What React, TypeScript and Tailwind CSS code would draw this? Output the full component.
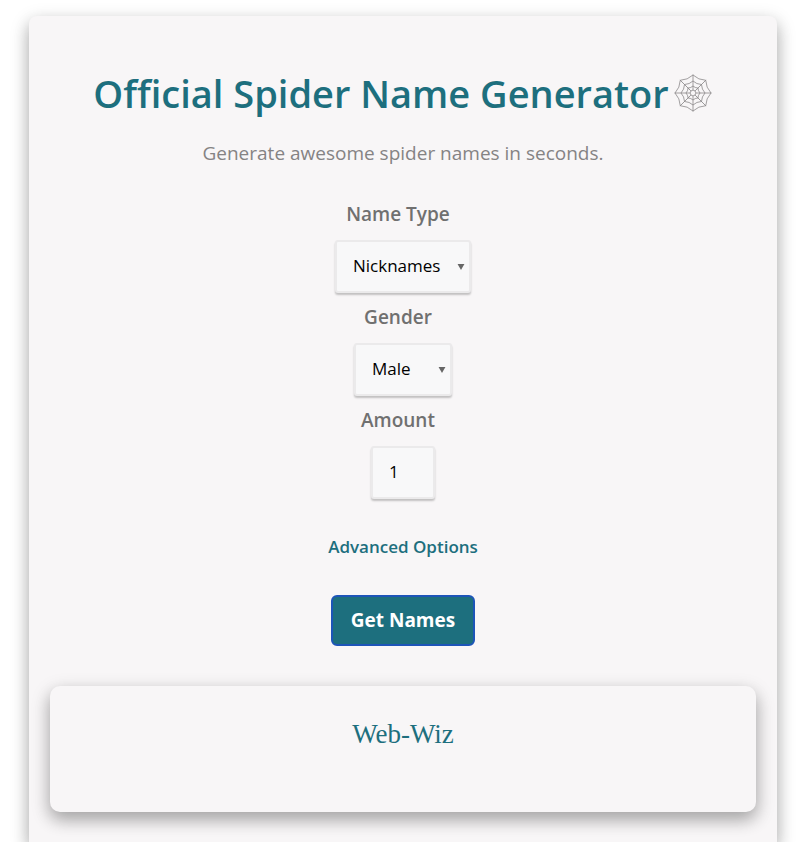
import { useState } from 'react';
import type { ReactNode } from 'react';

const NAME_TYPES = ['Nicknames', 'Full Names'];
const GENDERS = ['Male', 'Female'];

const SPOKES = [0, 45, 90, 135, 180, 225, 270, 315];
const RINGS = [18, 12, 7, 3];

// One ring of the web: eight threads sagging towards the middle
function ringPath(radius: number) {
  const point = (deg: number, r: number) => {
    const rad = (deg * Math.PI) / 180;
    return `${(20 + r * Math.cos(rad)).toFixed(2)} ${(20 + r * Math.sin(rad)).toFixed(2)}`;
  };
  const arcs = SPOKES.map((deg) => `Q${point(deg + 22.5, radius * 0.78)} ${point(deg + 45, radius)}`);
  return `M${point(0, radius)}${arcs.join('')}Z`;
}

function WebIcon() {
  return (
    <svg viewBox="0 0 40 40" className="size-10 shrink-0" fill="none" stroke="#8a8889" strokeWidth="0.8" aria-hidden="true">
      {SPOKES.map((deg) => (
        <path key={deg} d="M20 17V1.5" transform={`rotate(${deg} 20 20)`} />
      ))}
      {RINGS.map((radius) => (
        <path key={radius} d={ringPath(radius)} />
      ))}
    </svg>
  );
}

const CONTROL =
  'h-[53px] appearance-none rounded-[3px] border-2 border-[#ebeaeb] bg-[#f8f8f9] pb-0.5 pl-4 text-[17px] text-black shadow-[0_2px_2px_rgba(0,0,0,0.22)]';

function Field({ id, label, children }: { id: string; label: string; children: ReactNode }) {
  return (
    <div className="flex flex-col items-center gap-3.5">
      <label htmlFor={id} className="pr-2.5 text-[19px] leading-6 font-semibold text-[#707070]">
        {label}
      </label>
      {children}
    </div>
  );
}

function Select({ id, options, width }: { id: string; options: string[]; width: string }) {
  return (
    <div className="relative">
      <select id={id} className={`${CONTROL} ${width} block`}>
        {options.map((option) => (
          <option key={option}>{option}</option>
        ))}
      </select>
      <svg viewBox="0 0 8 7" className="pointer-events-none absolute top-6 right-1.5 h-1.5 w-2" fill="#666666" aria-hidden="true">
        <path d="M0 0h8L4 7z" />
      </svg>
    </div>
  );
}

export default function App() {
  const [amount, setAmount] = useState('1');

  return (
    <div className="min-h-screen overflow-hidden bg-white pt-4 pr-[23px] pl-[29px] font-['Open_Sans',sans-serif]">
      <main className="rounded-t-lg bg-[#f8f6f7] px-[21px] pt-[53px] pb-[30px] shadow-[0_8px_16px_rgba(0,0,0,0.2),0_6px_20px_rgba(0,0,0,0.19)]">
        <header className="flex flex-col items-center text-center">
          <div className="flex items-center justify-center gap-1">
            <h1 className="text-[38px] leading-12 font-semibold text-[#1d6f7e]">Official Spider Name Generator</h1>
            <WebIcon />
          </div>
          <p className="mt-[22px] text-[19px] leading-7 text-[#858384]">Generate awesome spider names in seconds.</p>
        </header>

        <form className="mt-[35px] flex flex-col items-center gap-3" onSubmit={(e) => e.preventDefault()}>
          <Field id="name-type" label="Name Type">
            <Select id="name-type" options={NAME_TYPES} width="w-[136px]" />
          </Field>
          <Field id="gender" label="Gender">
            <Select id="gender" options={GENDERS} width="w-[98px]" />
          </Field>
          <Field id="amount" label="Amount">
            <input
              id="amount"
              type="text"
              inputMode="numeric"
              value={amount}
              onChange={(e) => setAmount(e.target.value)}
              className={`${CONTROL} w-16`}
            />
          </Field>
          <a href="#advanced" className="mt-6 text-[17px] leading-6 font-semibold text-[#1d6f7e]">
            Advanced Options
          </a>
          <button
            type="submit"
            className="mt-6 h-[51px] w-36 rounded-md border-2 border-[#1d55b8] bg-[#1d6f7e] text-[19px] font-bold text-white"
          >
            Get Names
          </button>
        </form>

        <section className="mt-10 h-[126px] rounded-[10px] bg-[#f8f6f7] pt-8 text-center shadow-[0_8px_16px_rgba(0,0,0,0.2),0_6px_20px_rgba(0,0,0,0.19)]">
          <p className="font-['Liberation_Serif',serif] text-[27px] leading-8 text-[#1d6f7e]">Web-Wiz</p>
        </section>
      </main>
    </div>
  );
}
